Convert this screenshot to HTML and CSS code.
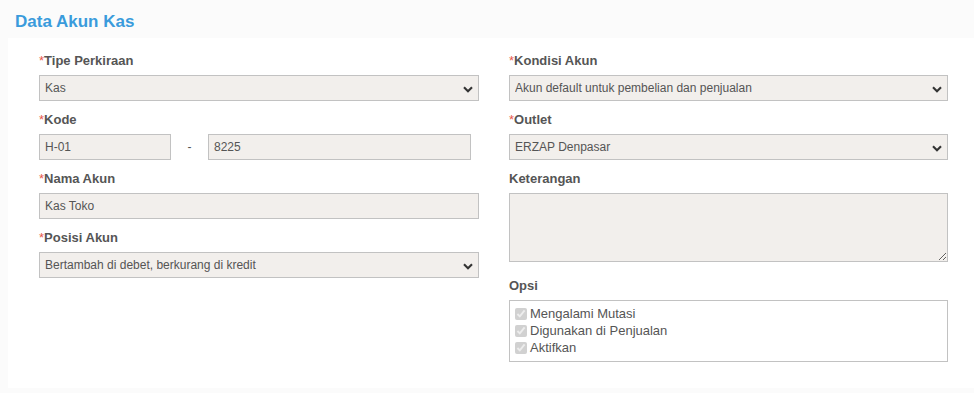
FILE: index.html
```html
<!DOCTYPE html>
<html lang="id">
<head>
    <meta charset="UTF-8">
    <meta name="viewport" content="width=device-width, initial-scale=1.0">
    <title>Data Akun Kas</title>
    <link rel="stylesheet" href="styles.css">
</head>
<body>
    <h1 class="page-title">Data Akun Kas</h1>
    <div class="panel">
        <div class="form-grid">
            <div class="col">
                <div class="form-group">
                    <label><span class="req">*</span>Tipe Perkiraan</label>
                    <div class="select-wrap">
                        <select class="field">
                            <option>Kas</option>
                        </select>
                        <svg class="chevron" width="10" height="7" viewBox="0 0 10 7"><path d="M1 1.2 L5 5.2 L9 1.2" fill="none" stroke="#333" stroke-width="2.1"/></svg>
                    </div>
                </div>
                <div class="form-group">
                    <label><span class="req">*</span>Kode</label>
                    <div class="kode-row">
                        <input type="text" class="field" value="H-01" readonly>
                        <span class="sep">-</span>
                        <input type="text" class="field" value="8225">
                    </div>
                </div>
                <div class="form-group">
                    <label><span class="req">*</span>Nama Akun</label>
                    <input type="text" class="field" value="Kas Toko">
                </div>
                <div class="form-group">
                    <label><span class="req">*</span>Posisi Akun</label>
                    <div class="select-wrap">
                        <select class="field">
                            <option>Bertambah di debet, berkurang di kredit</option>
                        </select>
                        <svg class="chevron" width="10" height="7" viewBox="0 0 10 7"><path d="M1 1.2 L5 5.2 L9 1.2" fill="none" stroke="#333" stroke-width="2.1"/></svg>
                    </div>
                </div>
            </div>
            <div class="col">
                <div class="form-group">
                    <label><span class="req">*</span>Kondisi Akun</label>
                    <div class="select-wrap">
                        <select class="field">
                            <option>Akun default untuk pembelian dan penjualan</option>
                        </select>
                        <svg class="chevron" width="10" height="7" viewBox="0 0 10 7"><path d="M1 1.2 L5 5.2 L9 1.2" fill="none" stroke="#333" stroke-width="2.1"/></svg>
                    </div>
                </div>
                <div class="form-group">
                    <label><span class="req">*</span>Outlet</label>
                    <div class="select-wrap">
                        <select class="field">
                            <option>ERZAP Denpasar</option>
                        </select>
                        <svg class="chevron" width="10" height="7" viewBox="0 0 10 7"><path d="M1 1.2 L5 5.2 L9 1.2" fill="none" stroke="#333" stroke-width="2.1"/></svg>
                    </div>
                </div>
                <div class="form-group group-note">
                    <label>Keterangan</label>
                    <textarea class="field note"></textarea>
                </div>
                <div class="form-group">
                    <label>Opsi</label>
                    <div class="options">
                        <label class="check"><input type="checkbox" checked disabled> Mengalami Mutasi</label>
                        <label class="check"><input type="checkbox" checked disabled> Digunakan di Penjualan</label>
                        <label class="check"><input type="checkbox" checked disabled> Aktifkan</label>
                    </div>
                </div>
            </div>
        </div>
    </div>
</body>
</html>
```

FILE: styles.css
```css
body {
    margin: 0;
    font-family: "Liberation Sans", Arial, sans-serif;
    background-color: #fbfbfb;
    color: #555;
}

.page-title {
    margin: 0;
    padding: 12px 15px 6px;
    font-size: 17px;
    line-height: 20px;
    font-weight: bold;
    color: #3a9bdc;
}

.panel {
    background: #fff;
    margin: 0 0 0 8px;
    padding: 14px 31px 26px;
    height: 310px;
}

.form-grid {
    display: grid;
    grid-template-columns: 440px 439px;
    column-gap: 30px;
}

.form-group {
    margin-bottom: 10px;
}

.form-group > label {
    display: block;
    font-size: 13px;
    line-height: 18px;
    font-weight: bold;
    color: #555;
    margin-bottom: 5px;
}

.req {
    color: #e8584c;
    font-weight: normal;
}

.field {
    display: block;
    box-sizing: border-box;
    width: 100%;
    height: 26px;
    margin: 0;
    padding: 0 5px;
    font-family: "Liberation Sans", Arial, sans-serif;
    font-size: 12px;
    color: #555;
    background-color: #f2efec;
    border: 1px solid #c2c2c2;
    border-radius: 0;
    outline: none;
}

.select-wrap {
    position: relative;
}

select.field {
    appearance: none;
    -webkit-appearance: none;
    padding-right: 24px;
}

.chevron {
    position: absolute;
    right: 6px;
    top: 11px;
    pointer-events: none;
}

.kode-row {
    display: flex;
    align-items: center;
}

.kode-row .field:first-child {
    width: 132px;
}

.kode-row .field:last-child {
    width: 263px;
}

.sep {
    width: 37px;
    text-align: center;
    font-size: 12px;
}

.note {
    height: 69px;
    padding: 4px 6px;
    resize: vertical;
}

.group-note {
    margin-bottom: 15px;
}

.options {
    border: 1px solid #c2c2c2;
    height: 62px;
    box-sizing: border-box;
    padding: 4px 5px;
}

.check {
    display: flex;
    align-items: center;
    font-size: 13px;
    line-height: 17px;
    color: #555;
}

.check input {
    margin: 0 3px 0 0;
    width: 12px;
    height: 12px;
}
```
